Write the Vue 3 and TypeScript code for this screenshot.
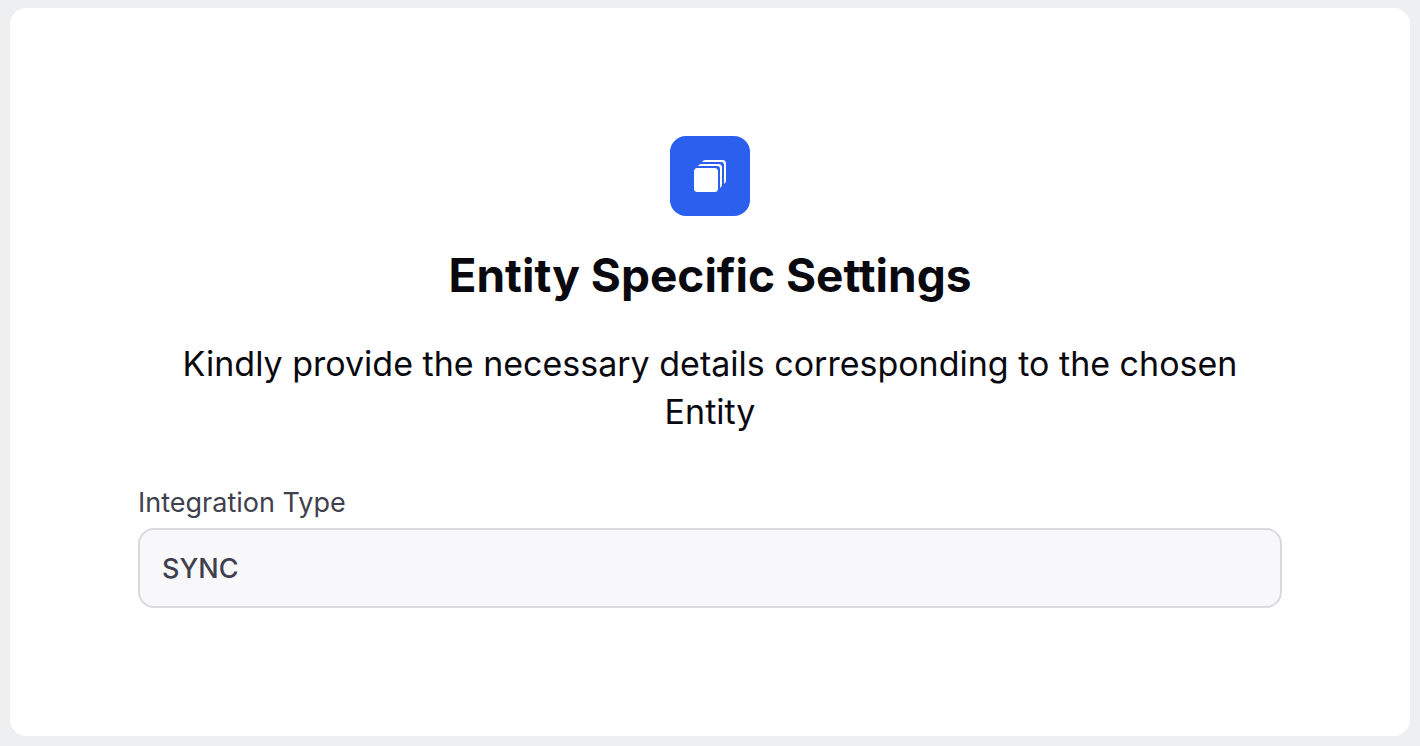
<script setup lang="ts">
import { ref } from 'vue'

const integrationType = ref<string>('SYNC')
</script>

<template>
  <div class="page">
    <main class="card">
      <span class="badge">
        <svg class="icon" viewBox="0 0 40 40" fill="none" aria-hidden="true">
          <rect x="4" y="12" width="24" height="24" rx="3.5" fill="#fff" />
          <path d="M8 10C8.7 8.8 10 8 11.5 8H28.5A3.5 3.5 0 0 1 32 11.5V28.5C32 30 31.2 31.3 30 32V13A3 3 0 0 0 27 10Z" fill="#fff" />
          <path d="M12 6C12.7 4.8 14 4 15.5 4H32.5A3.5 3.5 0 0 1 36 7.5V24.5C36 26 35.2 27.3 34 28V9A3 3 0 0 0 31 6Z" fill="#fff" />
        </svg>
      </span>
      <h1 class="title">Entity Specific Settings</h1>
      <p class="lead">Kindly provide the necessary details corresponding to the chosen Entity</p>
      <form class="form" @submit.prevent>
        <label class="label" for="integration-type">Integration Type</label>
        <input id="integration-type" v-model="integrationType" class="input" type="text" readonly />
      </form>
    </main>
  </div>
</template>

<style>
body {
  background: #eeeff1;
}
</style>

<style scoped>
.page {
  box-sizing: border-box;
  min-height: 100vh;
  display: flex;
  padding: 8px 10px 10px;
  background: #eeeff1;
  font-family: Inter, "Liberation Sans", sans-serif;
}
.card {
  flex: 1;
  display: flex;
  flex-direction: column;
  align-items: center;
  padding: 128px;
  border-radius: 16px;
  background: #fff;
  color: #09090f;
}
.badge {
  display: flex;
  padding: 20px;
  border-radius: 16px;
  background: #2b5fed;
}
.icon {
  width: 40px;
  height: 40px;
}
.title {
  margin: 28px 0 0;
  font-size: 46px;
  line-height: 62px;
  font-weight: 700;
}
.lead {
  margin: 34px 0 0;
  font-size: 34px;
  line-height: 48px;
  text-align: center;
}
.form {
  display: flex;
  flex-direction: column;
  align-self: stretch;
  gap: 6px;
  margin-top: 48px;
}
.label {
  color: #3f3f4d;
  font-size: 27px;
  line-height: 38px;
}
.input {
  box-sizing: border-box;
  width: 100%;
  height: 80px;
  padding: 0 22px;
  border: 2px solid #dadadc;
  border-radius: 16px;
  outline: none;
  background: #f8f8fb;
  color: #3f3f4d;
  font: inherit;
  font-size: 27px;
  font-weight: 500;
}
</style>
